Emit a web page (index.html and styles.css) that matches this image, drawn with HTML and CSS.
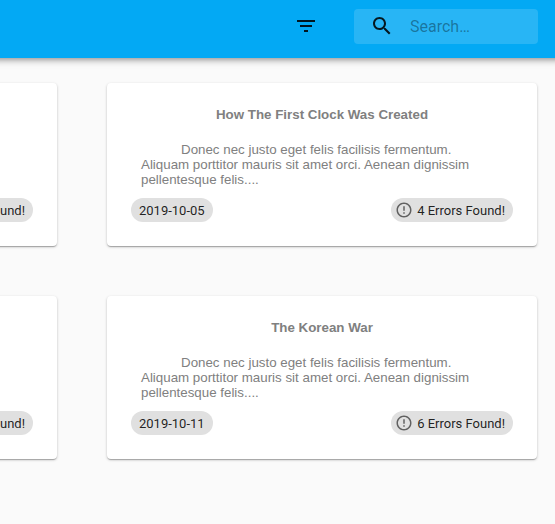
FILE: index.html
```html
<!DOCTYPE html>
<html lang="en">
<head>
<meta charset="utf-8">
<title>Documents</title>
<link rel="stylesheet" href="styles.css">
</head>
<body>
<header class="appbar">
  <svg class="icon" viewBox="0 0 24 24"><path d="M10 18h4v-2h-4v2zM3 6v2h18V6H3zm3 7h12v-2H6v2z"/></svg>
  <div class="search">
    <svg class="icon" viewBox="0 0 24 24"><path d="M15.5 14h-.79l-.28-.27C15.41 12.59 16 11.11 16 9.5 16 5.91 13.09 3 9.500 3S3 5.910 3 9.500 5.910 16 9.500 16c1.610 0 3.090-.59 4.230-1.570l.27.28v.79l5 4.990L20.490 19l-4.990-5zm-6 0C7.010 14 5 11.990 5 9.500S7.010 5 9.500 5 14 7.010 14 9.500 11.990 14 9.500 14z"/></svg>
    <input class="search-input" type="text" placeholder="Search…" aria-label="search">
  </div>
</header>
<main class="grid">
  <article class="card card-cut">
    <footer class="chips"><span class="chip">und!</span></footer>
  </article>
  <article class="card">
    <h2 class="title">How The First Clock Was Created</h2>
    <p class="excerpt">Donec nec justo eget felis facilisis fermentum. Aliquam porttitor mauris sit amet orci. Aenean dignissim pellentesque felis....</p>
    <footer class="chips">
      <span class="chip">2019-10-05</span>
      <span class="chip chip-error"><svg class="chip-icon" viewBox="0 0 24 24"><path d="M11 15h2v2h-2zm0-8h2v6h-2zm.99-5C6.470 2 2 6.480 2 12s4.470 10 9.990 10C17.520 22 22 17.520 22 12S17.520 2 11.990 2zM12 20c-4.420 0-8-3.580-8-8s3.580-8 8-8 8 3.580 8 8-3.580 8-8 8z"/></svg>4 Errors Found!</span>
    </footer>
  </article>
  <article class="card card-cut">
    <footer class="chips"><span class="chip">und!</span></footer>
  </article>
  <article class="card">
    <h2 class="title">The Korean War</h2>
    <p class="excerpt">Donec nec justo eget felis facilisis fermentum. Aliquam porttitor mauris sit amet orci. Aenean dignissim pellentesque felis....</p>
    <footer class="chips">
      <span class="chip">2019-10-11</span>
      <span class="chip chip-error"><svg class="chip-icon" viewBox="0 0 24 24"><path d="M11 15h2v2h-2zm0-8h2v6h-2zm.99-5C6.470 2 2 6.480 2 12s4.470 10 9.990 10C17.520 22 22 17.520 22 12S17.520 2 11.990 2zM12 20c-4.420 0-8-3.580-8-8s3.580-8 8-8 8 3.580 8 8-3.580 8-8 8z"/></svg>6 Errors Found!</span>
    </footer>
  </article>
</main>
</body>
</html>
```
FILE: styles.css
```css
* { box-sizing: border-box; }
body {
  margin: 0;
  min-height: 100vh;
  overflow-x: hidden;
  background: #fafafa;
  font-family: Roboto, sans-serif;
}
.appbar {
  height: 58px;
  margin: 0 -20px;
  padding: 0 37px 5px 0;
  display: flex;
  align-items: center;
  justify-content: flex-end;
  gap: 36px;
  background: #03a9f4;
  box-shadow: 0 2px 4px -1px rgba(0,0,0,.2), 0 4px 5px rgba(0,0,0,.14), 0 1px 10px rgba(0,0,0,.12);
}
.icon { width: 24px; height: 24px; margin-bottom: 2px; flex: none; fill: rgba(0,0,0,.87); }
.search {
  display: flex;
  align-items: center;
  gap: 16px;
  width: 184px;
  height: 35px;
  padding-left: 16px;
  border-radius: 4px;
  background: rgba(255,255,255,.15);
}
.search-input {
  min-width: 0;
  flex: 1;
  padding: 0;
  border: 0;
  outline: 0;
  background: none;
  font: 16px Roboto, sans-serif;
}
.search-input::placeholder { color: rgba(0,0,0,.37); }
.grid {
  display: grid;
  grid-template-columns: 57px 430px;
  grid-auto-rows: 163px;
  gap: 50px;
  padding: 25px 0;
}
.card {
  display: flex;
  flex-direction: column;
  padding: 24px;
  border-radius: 4px;
  background: #fff;
  box-shadow: 0 1px 3px rgba(0,0,0,.2), 0 1px 1px rgba(0,0,0,.14), 0 2px 1px -1px rgba(0,0,0,.12);
}
.card-cut { margin-left: -10px; padding-left: 10px; }
.title {
  margin: 0 0 20px;
  font: bold 13.333px/15px "Liberation Sans", Arial, sans-serif;
  color: #808080;
  text-align: center;
}
.excerpt {
  margin: 0;
  padding: 0 40px 0 10px;
  font: 13.34px/15px "Liberation Sans", Arial, sans-serif;
  color: #808080;
  text-indent: 40px;
}
.chips { display: flex; justify-content: space-between; margin-top: auto; }
.chip {
  display: flex;
  align-items: center;
  height: 24px;
  padding: 0 8px;
  border-radius: 12px;
  background: #e0e0e0;
  color: rgba(0,0,0,.87);
  font-size: 13px;
  white-space: nowrap;
}
.card-cut .chip { padding-left: 0; border-radius: 0 12px 12px 0; }
.chip-error { padding-left: 4px; }
.chip-icon { width: 18px; height: 18px; margin-right: 4px; fill: #616161; }
```
